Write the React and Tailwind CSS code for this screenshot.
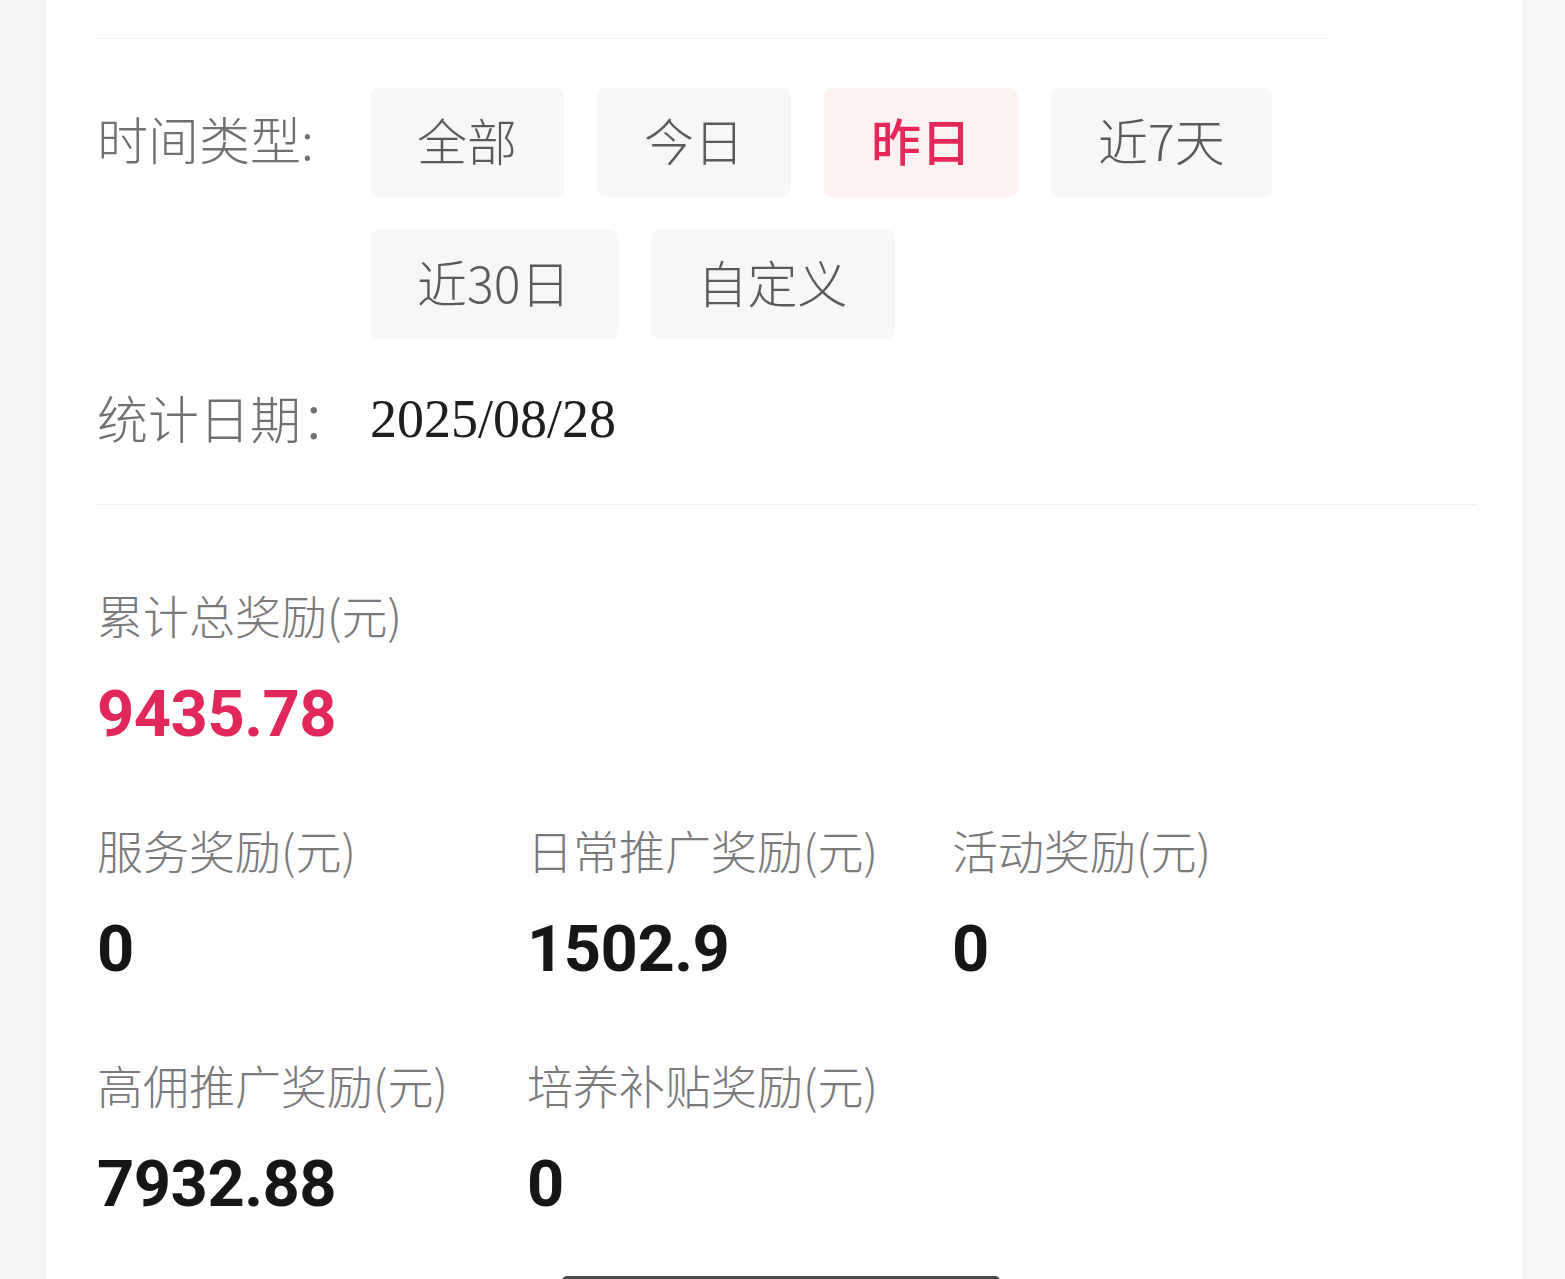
import React from "react";

const cjk = { fontFamily: '"Noto Sans CJK SC", "Noto Sans", sans-serif' };
const num = { fontFamily: 'Roboto, "Noto Sans", sans-serif' };
const serif = { fontFamily: '"Liberation Serif", "Noto Sans CJK SC", serif' };

const Btn = ({ children, active }) => (
  <div
    className={
      "h-[109px] px-[47px] pb-[8px] flex items-center justify-center rounded-[8px] text-[50px] leading-none " +
      (active ? "bg-[#fff2f3] text-[#e4285a] font-medium" : "bg-[#f7f7f7] text-[#5a5a5a] font-light")
    }
    style={cjk}
  >
    {children}
  </div>
);

const Stat = ({ label, value, red }) => (
  <div className="flex flex-col">
    <div className="h-[60px] pb-[4px] flex items-center text-[46px] font-light text-[#7a7a7a] leading-none whitespace-nowrap" style={cjk}>
      {label}
    </div>
    <div
      className={"mt-[33px] h-[70px] flex items-center text-[65px] font-bold tracking-[-0.5px] leading-none " + (red ? "text-[#e2275a]" : "text-[#161616]")}
      style={num}
    >
      {value}
    </div>
  </div>
);

export default function App() {
  return (
    <div className="relative w-full h-[1279px] overflow-hidden bg-[#f5f5f5] flex">
      <div className="w-[46px] shrink-0 bg-[#f4f4f4]" />
      <div className="w-[1476px] shrink-0 bg-white pl-[51px]">
        <div className="pt-[38px]">
          <div className="h-px w-[1233px] bg-[#f2f2f2]" />
        </div>

        <div className="mt-[49px] flex items-start">
          <div className="w-[273px] h-[109px] pb-[8px] flex items-center text-[51px] font-light text-[#707070] leading-none whitespace-nowrap" style={cjk}>
            时间类型:
          </div>
          <div className="w-[950px] flex flex-wrap gap-x-[33px] gap-y-[33px]">
            <Btn>全部</Btn>
            <Btn>今日</Btn>
            <Btn active>昨日</Btn>
            <Btn>近7天</Btn>
            <Btn>近30日</Btn>
            <Btn>自定义</Btn>
          </div>
        </div>

        <div className="mt-[50px] h-[60px] flex items-center">
          <div className="w-[273px] pb-[4px] text-[51px] font-light text-[#707070] leading-none whitespace-nowrap" style={cjk}>
            统计日期：
          </div>
          <div className="text-[54px] text-[#1e1e1e] leading-none" style={serif}>
            2025/08/28
          </div>
        </div>

        <div className="mt-[55px] h-px w-[1380px] bg-[#f2f2f2]" />

        <div className="mt-[81px]">
          <Stat label="累计总奖励(元)" value="9435.78" red />
        </div>

        <div className="mt-[72px] grid grid-cols-[430px_425px_425px] gap-y-[72px]">
          <Stat label="服务奖励(元)" value="0" />
          <Stat label="日常推广奖励(元)" value="1502.9" />
          <Stat label="活动奖励(元)" value="0" />
          <Stat label="高佣推广奖励(元)" value="7932.88" />
          <Stat label="培养补贴奖励(元)" value="0" />
        </div>
      </div>
      <div className="flex-1 bg-[#f6f6f6]" />

      <div className="absolute left-[562px] top-[1276px] w-[438px] h-[10px] rounded-full bg-[#4a4a4c]" />
    </div>
  );
}
